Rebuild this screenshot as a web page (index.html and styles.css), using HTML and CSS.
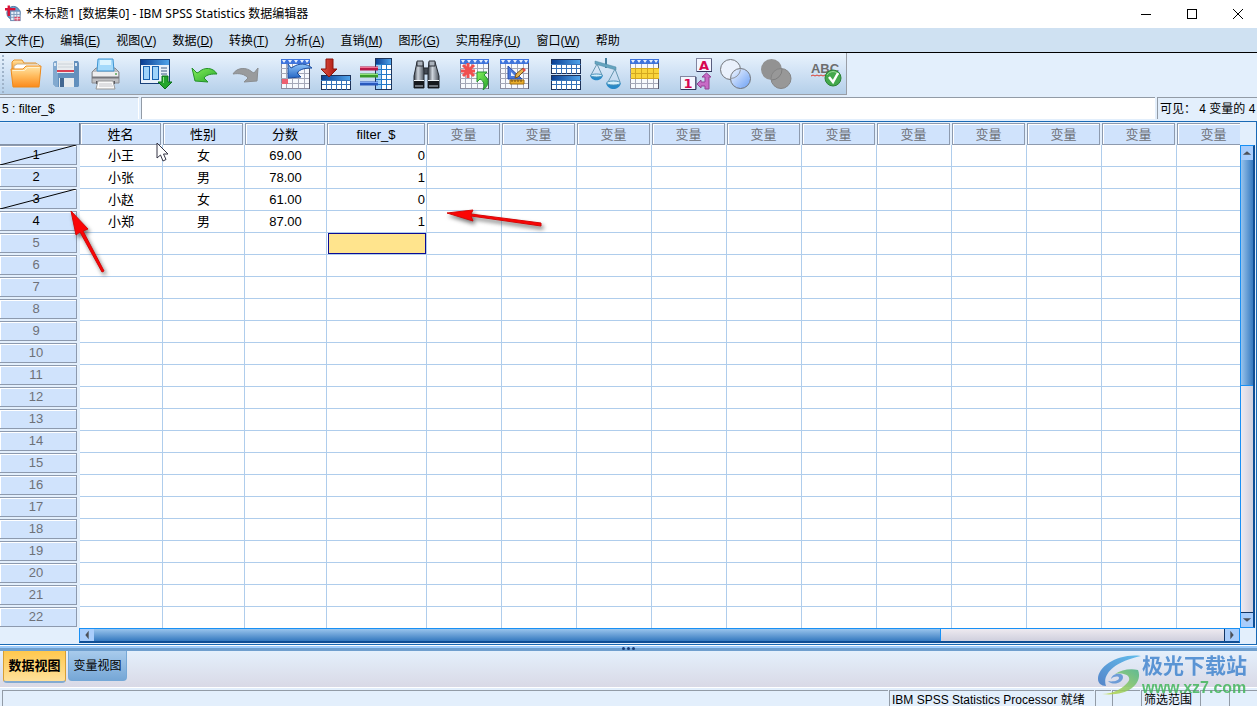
FILE: index.html
```html
<!DOCTYPE html>
<html lang="zh-CN">
<head>
<meta charset="utf-8">
<title>*未标题1 [数据集0] - IBM SPSS Statistics 数据编辑器</title>
<link rel="stylesheet" href="styles.css">
</head>
<body>
<svg class="defs" aria-hidden="true">
  <defs>
    <linearGradient id="gold" x1="0" y1="0" x2="0" y2="1"><stop offset="0" stop-color="#ffe6a8"/><stop offset=".5" stop-color="#ffb95a"/><stop offset="1" stop-color="#fb8a1c"/></linearGradient>
    <linearGradient id="blueBar" x1="0" y1="0" x2="1" y2="0"><stop offset="0" stop-color="#0b3f93"/><stop offset="1" stop-color="#4fa3ea"/></linearGradient>
    <linearGradient id="lens" x1="0" y1="0" x2="1" y2="1"><stop offset="0" stop-color="#f4f8ff"/><stop offset="1" stop-color="#6a9ff5"/></linearGradient>
    <linearGradient id="leaf" x1="0" y1="0" x2="1" y2="1"><stop offset="0" stop-color="#86f05c"/><stop offset="1" stop-color="#27a52b"/></linearGradient>
    <linearGradient id="sky" x1="0" y1="0" x2="0" y2="1"><stop offset="0" stop-color="#8fc4fa"/><stop offset="1" stop-color="#2566c4"/></linearGradient>
    <linearGradient id="red" x1="0" y1="0" x2="1" y2="0"><stop offset="0" stop-color="#e2574a"/><stop offset="1" stop-color="#a81208"/></linearGradient>
    <linearGradient id="steel" x1="0" y1="0" x2="1" y2="0"><stop offset="0" stop-color="#3a4048"/><stop offset=".4" stop-color="#cfd6de"/><stop offset="1" stop-color="#4b535d"/></linearGradient>
    <symbol id="sheet" viewBox="0 0 32 32">
      <rect x="1.500" y="1.500" width="28" height="29" fill="#f7f9fd" stroke="#8b8da0"/>
      <path d="M1 10.500h29M1 15.500h29M1 20.500h29M1 25.500h29M6.500 5v25M12.500 5v25M18.500 5v25M24.500 5v25" stroke="#a5a8b8" fill="none"/>
      <rect x="1" y="1" width="29" height="5" fill="#3f74dc"/>
      <path d="M2 2h4l-2 3zM8 2h4l-2 3zM14 2h4l-2 3zM20 2h4l-2 3zM25 2h4l-2 3z" fill="#e8f1ff"/>
      <path d="M29.500 5v26" stroke="#55586c"/>
    </symbol>
    <symbol id="band" viewBox="0 0 30 15">
      <rect x=".5" y=".5" width="29" height="14" fill="#fff" stroke="#1d3158"/>
      <rect x="1" y="1" width="28" height="4" fill="url(#blueBar)"/>
      <path d="M0 5.500h30M1 9.500h28M5.500 6v9M10.500 6v9M15.500 6v9M20.500 6v9M25.500 6v9" stroke="#3572b8" fill="none"/>
    </symbol>
  </defs>
</svg>
<div class="app">
  <header class="titlebar">
    <svg class="logo" viewBox="0 0 18 18" aria-hidden="true"><circle cx="9" cy="8" r="7" fill="#6d9fcd"/><circle cx="9" cy="8" r="7" fill="none" stroke="#416f9d"/><path d="M4 0v11M0 4h11" stroke="#d81337" stroke-width="2.500"/><rect x="6" y="6" width="10" height="10" fill="#e8f1fb" stroke="#6286b0"/><path d="M6 9.500h10M6 12.500h10M9.500 6v10M12.500 6v10" stroke="#7f9bbd"/><path d="M10 12h6v4h-6z" fill="#d94763"/><path d="M10 14h6M13 12v4" stroke="#fff" stroke-width=".7"/></svg>
    <h1>*未标题1 [数据集0] - IBM SPSS Statistics 数据编辑器</h1>
    <div class="window-buttons">
      <button aria-label="最小化"><svg viewBox="0 0 12 12"><path d="M1 6.500h10"/></svg></button>
      <button aria-label="最大化"><svg viewBox="0 0 12 12"><rect x="1.500" y="1.500" width="9" height="9"/></svg></button>
      <button aria-label="关闭"><svg viewBox="0 0 12 12"><path d="M1 1l10 10M11 1L1 11"/></svg></button>
    </div>
  </header>

  <nav class="menubar">
    <button>文件(<u>F</u>)</button><button>编辑(<u>E</u>)</button><button>视图(<u>V</u>)</button><button>数据(<u>D</u>)</button><button>转换(<u>T</u>)</button><button>分析(<u>A</u>)</button><button>直销(<u>M</u>)</button><button>图形(<u>G</u>)</button><button>实用程序(<u>U</u>)</button><button>窗口(<u>W</u>)</button><button>帮助</button>
  </nav>

  <div class="toolbar-row">
    <div class="toolbar">
      <div class="group">
        <button aria-label="打开"><svg viewBox="0 0 32 32"><path d="M2 8V4l2-2h8l2 3h12l2 2v6H2z" fill="url(#gold)" stroke="#e5912c"/><path d="M4 8l3-2h21l2 2v8H4z" fill="#fff" stroke="#c9b28a"/><path d="M1 11h12l3-3h15l-2 21H3z" fill="url(#gold)" stroke="#ee8a1b"/><path d="M2.500 12.500h12l3-3h12" stroke="#fff2cf" fill="none"/></svg></button>
        <button aria-label="保存"><svg viewBox="0 0 32 32"><path d="M3 5l2-2h23l1 2v23l-1 1H6l-3-3z" fill="#6390bd"/><path d="M3 5l2-2h3v26H6l-3-3z" fill="#82a9cf"/><path d="M7 3h17v12H7z" fill="#e9edf0"/><path d="M7 12h17v2H7z" fill="#d94155"/><path d="M8 6h15M8 9h15" stroke="#cbd2d8"/><path d="M9 20h15v9H9z" fill="#e7ebee"/><path d="M10 20h4v9h-4z" fill="#436791"/><path d="M25 5h2v3h-2zM4 5h2v3H4z" fill="#d9e6f2"/></svg></button>
        <button aria-label="打印"><svg viewBox="0 0 32 32"><path d="M2 14l4-4h19l4 4v11H2z" fill="#bfc0c3" stroke="#898a8e"/><path d="M8 1h15l1 12H7z" fill="#a5dafb" stroke="#3c94d3"/><path d="M10 2h11v5H10z" fill="#dcf4ff"/><path d="M3 14h25v5H3z" fill="#eeeeef"/><path d="M2 19.500h27" stroke="#76777c" stroke-width="2"/><circle cx="26" cy="16" r="1" fill="#58a558"/><path d="M6 23h19v3H6z" fill="#595a60"/><path d="M8 23h15l2 8H6z" fill="#fafafa" stroke="#999"/><path d="M9 26h13M9 28h14" stroke="#c4c4c8"/></svg></button>
      </div>
      <div class="group">
        <button aria-label="重新调用对话框"><svg viewBox="0 0 32 32"><rect x=".5" y="1.500" width="29" height="24" fill="#e9f1fa" stroke="#183f78"/><path d="M1 2h28v5H1z" fill="url(#blueBar)"/><rect x="3.500" y="8.500" width="6" height="13" fill="#9fd4fb" stroke="#1862b0"/><rect x="12.500" y="8.500" width="6" height="13" fill="#9fd4fb" stroke="#1862b0"/><path d="M21 10h6M21 13h6M21 16h6" stroke="#93a7c0" stroke-width="2"/><path d="M22 18h6v6h4l-7 7-7-7h4z" fill="#23a52d" stroke="#087119"/><path d="M23.500 19v6" stroke="#8ee58a"/></svg></button>
      </div>
      <div class="group">
        <button aria-label="撤销"><svg viewBox="0 0 32 32"><path d="M2 10l3 13 13 1-4-4c3-4 8-4 13-4-4-7-13-7-18-2l-2 1z" fill="url(#leaf)" stroke="#249228"/></svg></button>
        <button aria-label="重做"><svg viewBox="0 0 32 32"><path d="M28 10l-1 13-13 1 4-4c-3-4-9-5-15-4 4-7 14-7 19-2l2 1z" fill="#999b9d" stroke="#8b8e91"/></svg></button>
      </div>
      <div class="group">
        <button aria-label="转至个案"><svg viewBox="0 0 32 32"><use href="#sheet"/><path d="M2 21h6v5H2z" fill="#ef6071"/><path d="M8 6v14l13-1-4-4c3-4 8-5 15-5-6-5-13-5-19-1l-2 1z" fill="url(#sky)" stroke="#1c4d9f"/></svg></button>
        <button aria-label="转至变量"><svg viewBox="0 0 32 32"><use href="#band" x="1" y="17" width="30" height="15"/><path d="M6 1h7v10h4l-8 8-8-8h5z" fill="url(#red)" stroke="#8e150d"/></svg></button>
        <button aria-label="变量"><svg viewBox="0 0 32 32"><rect x="15.500" y=".5" width="16" height="31" fill="#fff" stroke="#1e355a"/><path d="M16 1h15v5H16z" fill="url(#blueBar)"/><path d="M16 6h6v25h-6z" fill="#9acdf5"/><path d="M16 6.500h15M16 11.500h15M16 16.500h15M16 21.500h15M16 26.500h15M21.500 6v25M26.500 6v25" stroke="#2379c8"/><path d="M0 10.500h18" stroke="#b71847" stroke-width="4"/><path d="M0 9.500h18" stroke="#f27595"/><path d="M0 17.500h18" stroke="#399c2b" stroke-width="4"/><path d="M0 16.500h18" stroke="#91e37a"/><path d="M0 25.500h18" stroke="#2859bd" stroke-width="4"/><path d="M0 24.500h18" stroke="#80a8f2"/></svg></button>
      </div>
      <div class="group">
        <button aria-label="查找"><svg viewBox="0 0 32 32"><path d="M12 10h8v6h-8z" fill="#434a54" stroke="#20242b"/><path d="M7 4h6l1 9v17H4V18z" fill="url(#steel)" stroke="#272c34"/><path d="M19 4h6l4 14v12H18V13z" fill="url(#steel)" stroke="#272c34"/><path d="M7 3h6v5H7zM19 3h6v5h-6z" fill="#aab2bc" stroke="#2c3139"/><path d="M4 23h10v7H4zM18 23h11v7H18z" fill="#16191e"/><path d="M5 27h8v2H5zM19 27h9v2h-9z" fill="#6b7179"/><path d="M4 22.500h10M18 22.500h11" stroke="#eef2f5"/></svg></button>
      </div>
      <div class="group">
        <button aria-label="插入个案"><svg viewBox="0 0 32 32"><use href="#sheet" x="-1"/><path d="M8 5v15M1 13h14M3 7l11 11M14 7L3 18" stroke="#f04f4f" stroke-width="3"/><path d="M17 24V14h10l-3 3c6 4 5 11-1 15 2-5 1-9-3-11z" fill="url(#leaf)" stroke="#259331"/></svg></button>
        <button aria-label="插入变量"><svg viewBox="0 0 32 32"><use href="#sheet" x="-1"/><path d="M8 8v13h14z" fill="#4b79dc" stroke="#244daa"/><path d="M11 14v4h4z" fill="#e9f1ff"/><path d="M10 22h14v4H10z" fill="#e9ad2b" stroke="#a06c10"/><path d="M12 22v2M15 22v2M18 22v2M21 22v2" stroke="#714d11"/><path d="M15 20l1-4 7-6 2 2-7 7z" fill="#e6b34d" stroke="#7c541c"/><path d="M22 11l2-1 2 2-2 2z" fill="#e94d46"/></svg></button>
      </div>
      <div class="group">
        <button aria-label="拆分文件"><svg viewBox="0 0 32 32"><use href="#band" x="1" y="1" width="30" height="15"/><use href="#band" x="1" y="17" width="30" height="15"/></svg></button>
        <button aria-label="加权个案"><svg viewBox="0 0 32 32"><path d="M16 0v10" stroke="#467f9f" stroke-width="2"/><path d="M5 3l21 6v3L5 6z" fill="#65a4bf" stroke="#4987a3" stroke-width=".5"/><path d="M7 6L1 17M7 6l5 11M25 11l-7 13M25 11l5 13" stroke="#6596b0"/><path d="M0 17h13c-1 7-12 7-13 0zM16 25h15c-2 8-13 8-15 0z" fill="#288ac9"/><ellipse cx="6.500" cy="17.500" rx="6" ry="1.500" fill="#d4effc" stroke="#4c93bb"/><ellipse cx="23.500" cy="25" rx="7" ry="2" fill="#d4effc" stroke="#4c93bb"/></svg></button>
        <button aria-label="选择个案"><svg viewBox="0 0 32 32"><use href="#sheet" x="-1"/><path d="M1 11h28v9H1z" fill="#f9d43a"/><path d="M1 10.500h28M1 15.500h28M1 20.500h28M5.500 11v9M11.500 11v9M17.500 11v9M23.500 11v9" stroke="#d3a71e"/></svg></button>
      </div>
      <div class="group">
        <button aria-label="值标签"><svg viewBox="0 0 32 32" class="letters"><rect x="16.500" y=".5" width="15" height="13" fill="#f4f6ff" stroke="#8286a0"/><path d="M17 13.500h15V1" stroke="#31375c" fill="none"/><text x="24" y="12">A</text><rect x=".5" y="18.500" width="15" height="13" fill="#f4f6ff" stroke="#8286a0"/><path d="M1 31.500h15V19" stroke="#31375c" fill="none"/><text x="8" y="30">1</text><path d="M25 31v-3h-4v2l-4-4 4-4v2h4v-5h-3l4.500-4 4.500 4h-2v12z" fill="#c86bc6" stroke="#924393"/></svg></button>
        <button aria-label="使用变量集"><svg viewBox="0 0 32 32"><circle cx="10.500" cy="11.500" r="10" fill="#eaf1fc" stroke="#72757b"/><circle cx="20.500" cy="20.500" r="10" fill="url(#lens)" stroke="#72757b"/><path d="M20.500 11.500a10 10 0 0 1-10 9" fill="none" stroke="#8f939a"/></svg></button>
        <button aria-label="显示所有变量"><svg viewBox="0 0 32 32"><circle cx="11.500" cy="11.500" r="10.500" fill="#929292"/><circle cx="21" cy="20.500" r="10" fill="#989898" stroke="#858585"/><path d="M22 11a10.500 10.500 0 0 1-10.500 11" fill="none" stroke="#7f7f7f"/></svg></button>
      </div>
      <div class="group">
        <button aria-label="拼写检查"><svg viewBox="0 0 32 32" class="abc"><text x="15" y="15">ABC</text><path d="M1 18l2-1 2 1 2-1 2 1 2-1 2 1 2-1 2 1" fill="none" stroke="#dc3b2d"/><circle cx="23" cy="20" r="8" fill="#44a84c" stroke="#2b8135"/><path d="M17 17a7 7 0 0 1 12 0" stroke="#9cda98" fill="none"/><path d="M19 19l4 5 5-9" stroke="#fff" stroke-width="2.500" fill="none"/></svg></button>
      </div>
    </div>
  </div>

  <div class="edit-row">
    <output class="cell-name" for="cell-value">5 : filter_$</output>
    <input id="cell-value" class="cell-value" type="text" aria-label="单元格值">
    <div class="visible-count">可见： 4 变量的 4</div>
  </div>

  <main class="data-view">
    <div class="sheet">
      <table>
        <thead><tr id="columns"></tr></thead>
        <tbody id="rows"></tbody>
      </table>
    </div>
    <div class="vscroll">
      <button aria-label="向上滚动"><svg viewBox="0 0 12 12"><path d="M1 8l5-4 5 4z"/></svg></button>
      <div class="thumb"></div><div class="track"></div>
      <button aria-label="向下滚动"><svg viewBox="0 0 12 12"><path d="M1 4l5 4 5-4z"/></svg></button>
    </div>
    <div class="hscroll">
      <button aria-label="向左滚动"><svg viewBox="0 0 12 12"><path d="M8 1L4 6l4 5z"/></svg></button>
      <div class="thumb"></div><div class="track"></div>
      <button aria-label="向右滚动"><svg viewBox="0 0 12 12"><path d="M4 1l4 5-4 5z"/></svg></button>
    </div>
    <svg class="pointer" viewBox="0 0 13 20" aria-hidden="true"><path d="M1 1v15l3.500-3 2.500 6 3-1.500-2.500-5.500H12z" fill="#fff" stroke="#343444"/></svg>
    <svg class="arrow arrow-left" viewBox="0 0 48 76" aria-hidden="true"><path d="M4 4l5 24 4-3 22 40 2-1-21-40 5-2z"/></svg>
    <svg class="arrow arrow-right" viewBox="0 0 108 30" aria-hidden="true"><path d="M4 8l26 8-2-5 70 10v-3l-70-9 2-4z"/></svg>
  </main>

  <div class="splitter"><i></i><i></i><i></i></div>
  <div class="view-tabs">
    <button class="active">数据视图</button>
    <button>变量视图</button>
  </div>
  <footer class="statusbar">
    <span class="message"></span><span class="processor">IBM SPSS Statistics Processor 就绪</span><span class="tiny"></span><span class="small"></span><span class="filter">筛选范围</span><span class="small"></span><span class="small"></span>
  </footer>

  <div class="watermark">
    <svg viewBox="0 0 44 42" aria-hidden="true"><defs><linearGradient id="swooshBlue" x1="1" y1="0" x2="0" y2="1"><stop offset="0" stop-color="#4ab5ea"/><stop offset="1" stop-color="#3f76c4"/></linearGradient><linearGradient id="swooshGreen" x1="1" y1="0" x2="0" y2="1"><stop offset="0" stop-color="#49b384"/><stop offset="1" stop-color="#c6db43"/></linearGradient></defs><path d="M43 2C21-1 0 12 0 25c0 4 3 7 8 7C4 21 15 8 43 2z" fill="url(#swooshBlue)"/><path d="M40 16c5 12-8 27-36 24 12 0 21-6 26-12 4-5-2-10-13-8 6-4 15-6 23-4z" fill="url(#swooshGreen)"/><path d="M13 25c1-6 12-7 12-2 0 6-10 9-15 4 4 1 11 0 11-3 0-2-5-2-8 1z" fill="#5a91d4"/></svg>
    <div><strong>极光下载站</strong><span>www.xz7.com</span></div>
  </div>
</div>
<script src="app.js"></script>
</body>
</html>
```
FILE: styles.css
```css
* { box-sizing: border-box; }
body {
  margin: 0;
  background: #e3effc;
  color: #000;
  font: 13px/16px "Liberation Sans", "Noto Sans CJK SC", sans-serif;
}
button { margin: 0; padding: 0; border: 0; background: none; color: inherit; font: inherit; }
svg { display: block; }
.defs { position: absolute; width: 0; height: 0; }
.app { position: relative; display: flex; flex-direction: column; height: 100vh; overflow: hidden; }

.titlebar { display: flex; align-items: center; height: 28px; flex: none; padding-left: 5px; gap: 4px; background: #fff; }
.titlebar h1 { margin: 0; font: 12px/16px "Noto Sans", "Noto Sans CJK SC", sans-serif; white-space: nowrap; }
.logo { width: 17px; height: 18px; }
.window-buttons { display: flex; margin-left: auto; margin-right: -4px; }
.window-buttons button { width: 46px; height: 28px; display: grid; place-items: center; }
.window-buttons svg { width: 12px; height: 12px; fill: none; stroke: #000; }

.menubar { display: flex; gap: 16px; flex: none; height: 25px; padding: 1px 5px 0; background: #cfe1f2; border-bottom: 1px solid #000; font-size: 12px; }
.menubar button { white-space: nowrap; }

.toolbar-row { display: flex; flex: none; height: 44px; }
.toolbar { display: flex; align-items: center; gap: 18px; height: 42px; padding: 0 4px 0 8px; border-right: 1px solid #999ea6; border-bottom: 1px solid #999ea6; background: linear-gradient(#e9f3fd, #cfe1f4 50%, #b4cfe9); }
.toolbar::before { content: ""; width: 2px; height: 38px; margin-left: -6px; margin-right: -12px; background: repeating-linear-gradient(#9fb3c9 0 2px, transparent 2px 4px); }
.group { display: flex; gap: 8px; }
.group svg { width: 32px; height: 32px; fill: none; }
.letters text { font: bold 13px "DejaVu Sans", sans-serif; text-anchor: middle; fill: #d7064f; }
.abc text { font: bold 13px "Liberation Sans", sans-serif; text-anchor: middle; fill: #6d6d6d; }

.edit-row { display: flex; flex: none; gap: 2px; height: 24px; padding-bottom: 2px; }
.cell-name, .cell-value, .visible-count { height: 22px; border: 0 solid #929ba6; border-top-width: 1px; line-height: 22px; white-space: nowrap; }
.cell-name { width: 139px; padding-left: 2px; border-right: 1px solid #fff; font-size: 12px; }
.cell-value { flex: 1; min-width: 0; padding: 0 4px; border-left-width: 1px; background: #fff; border-radius: 0; }
.visible-count { width: 100px; padding-left: 2px; border-left-width: 1px; font-size: 12px; }

.data-view {
  position: relative;
  display: grid;
  grid-template: minmax(0, 1fr) 15px / minmax(0, 1fr) 15px;
  flex: 1;
  min-height: 0;
  padding: 1px 1px 1px 0;
  border: solid #1a6ab5;
  border-width: 1px 1px 1px 0;
}
.sheet { overflow: hidden; background: linear-gradient(90deg, #e3effc 80px, #fff 80px); }
table { border-collapse: separate; border-spacing: 0; table-layout: fixed; width: 1252px; }
th, td { height: 22px; padding: 0; font-weight: normal; white-space: nowrap; overflow: hidden; }
td { border: 0 solid #afcdec; border-width: 0 1px 1px 0; text-align: center; line-height: 20px; }
td.number { text-align: right; padding-right: 1px; }
.corner { width: 80px; background: #d0e3fc; border-bottom: 1px solid #8593a8; border-right: 1px solid #6b7b91; }
.name { width: 83px; }
.text { width: 82px; }
.flag { width: 100px; }
.var { width: 75px; }
thead th { background: #e3effc; }
.head { height: 22px; margin-right: 2px; border: 1px solid #8d9aae; box-shadow: inset 1px 1px #fff; background: #d0e3fc; line-height: 22px; }
.empty { color: #6e7178; }
tbody th { background: #e3effc; }
.number-box { position: relative; height: 20px; margin: 0 3px 2px 0; padding-right: 4px; border: solid #8d9aae; border-width: 1px 1px 1px 0; box-shadow: inset 1px 1px #fff; background: #d0e3fc; line-height: 18px; }
.number-box svg { position: absolute; left: 0; top: -1px; width: 100%; height: 20px; stroke: #000; }
.selected { height: 21px; margin-left: 1px; border: 1px solid #0b0b95; background: #ffe48d; }

.vscroll, .hscroll { display: flex; background: #d9d8e5; border: 1px solid #1890f5; }
.vscroll { flex-direction: column; margin-top: 22px; border-right: 2px solid #0f4e94; }
.hscroll { grid-row: 2; margin-left: 79px; border-bottom: 2px solid #0f4e94; }
.vscroll button, .hscroll button { flex: none; display: grid; place-items: center; background: #a9cdfb; }
.vscroll button { height: 14px; width: 100%; }
.hscroll button { width: 14px; }
.vscroll svg, .hscroll svg { width: 10px; height: 10px; fill: #4c5059; }
.vscroll .thumb { flex: 226; background: linear-gradient(90deg, #99c4ec, #3579bf); border-bottom: 1px solid #1890f5; }
.vscroll .track { flex: 228; background: linear-gradient(90deg, #eeeaf0, #cfcfdd); border-bottom: 1px solid #123665; }
.hscroll .thumb { flex: 848; background: linear-gradient(#99c4ec, #3579bf); border-right: 1px solid #1890f5; }
.hscroll .track { flex: 284; background: linear-gradient(#eeeaf0, #cfcfdd); border-right: 1px solid #123665; }

.pointer { position: absolute; left: 156px; top: 20px; width: 13px; height: 20px; }
.arrow { position: absolute; fill: #fb0505; stroke: #d50808; filter: drop-shadow(2px 3px 2px #555c); }
.arrow-left { left: 67px; top: 85px; width: 48px; height: 76px; }
.arrow-right { left: 443px; top: 83px; width: 108px; height: 30px; }

.splitter { display: flex; justify-content: center; align-items: center; gap: 2px; flex: none; height: 6px; border-top: 1px solid #fff; background: linear-gradient(#9dcbfa 50%, #6f9fce 50%); }
.splitter i { width: 3px; height: 3px; border-radius: 50%; background: #183d78; }
.view-tabs { display: flex; gap: 2px; flex: none; height: 37px; padding-left: 3px; background: linear-gradient(#e4f0fc, #d9d9e6); border-bottom: 1px solid #fff; font-size: 12px; align-items: flex-start; }
.view-tabs button { width: 59px; height: 30px; border: 1px solid #75a8d7; border-top: 0; border-radius: 0 0 4px 4px; background: linear-gradient(#a8cbec, #76a7d6); }
.view-tabs .active { width: 63px; height: 32px; border-color: #d99f32; background: linear-gradient(#ffc84d, #ffe19b); font-weight: bold; font-size: 13px; border-bottom: 2px solid #83aad1; }

.statusbar { display: flex; gap: 1px; flex: none; height: 18px; padding: 2px 0 0 2px; }
.statusbar span { flex: none; height: 16px; border: solid #929ba6; border-width: 1px 0 0 1px; padding-left: 2px; line-height: 18px; white-space: nowrap; overflow: hidden; font-size: 12px; }
.statusbar .message { flex: 1; min-width: 0; }
.statusbar .processor { width: 205px; }
.statusbar .tiny { width: 16px; }
.statusbar .small { width: 28px; }
.statusbar .filter { width: 58px; }

.watermark { position: absolute; right: 10px; bottom: 8px; display: flex; opacity: .85; }
.watermark svg { width: 44px; height: 42px; }
.watermark div { display: flex; flex-direction: column; align-items: flex-start; }
.watermark strong { color: #4386cf; font-size: 21px; line-height: 24px; }
.watermark span { color: #43b65b; font-size: 16px; font-weight: bold; line-height: 20px; }
```
FILE: app.js
```js
const columns = [
  ["姓名", "name"], ["性别", "text"], ["分数", "text"], ["filter_$", "flag"],
  ...Array.from({ length: 11 }, () => ["变量", "var"])
];
const cases = [
  ["小王", "女", "69.00", "0"],
  ["小张", "男", "78.00", "1"],
  ["小赵", "女", "61.00", "0"],
  ["小郑", "男", "87.00", "1"]
];
const rowCount = 22;
const strike = '<svg viewBox="0 0 77 20" preserveAspectRatio="none" aria-hidden="true"><path d="M0 20L77 0"/></svg>';

document.getElementById("columns").innerHTML = '<th class="corner"></th>' + columns
  .map(([label, kind]) => `<th scope="col" class="${kind}"><div class="head${kind === "var" ? " empty" : ""}">${label}</div></th>`)
  .join("");

document.getElementById("rows").innerHTML = Array.from({ length: rowCount }, (_, r) => {
  const data = cases[r];
  const filtered = data && data[3] === "0";
  const head = `<th scope="row"><div class="number-box${data ? "" : " empty"}">${r + 1}${filtered ? strike : ""}</div></th>`;
  const cells = columns.map((_, c) => {
    if (r === 4 && c === 3) return '<td><div class="selected"></div></td>';
    return `<td${c === 3 ? ' class="number"' : ""}>${data && data[c] ? data[c] : ""}</td>`;
  }).join("");
  return `<tr>${head}${cells}</tr>`;
}).join("");
```
